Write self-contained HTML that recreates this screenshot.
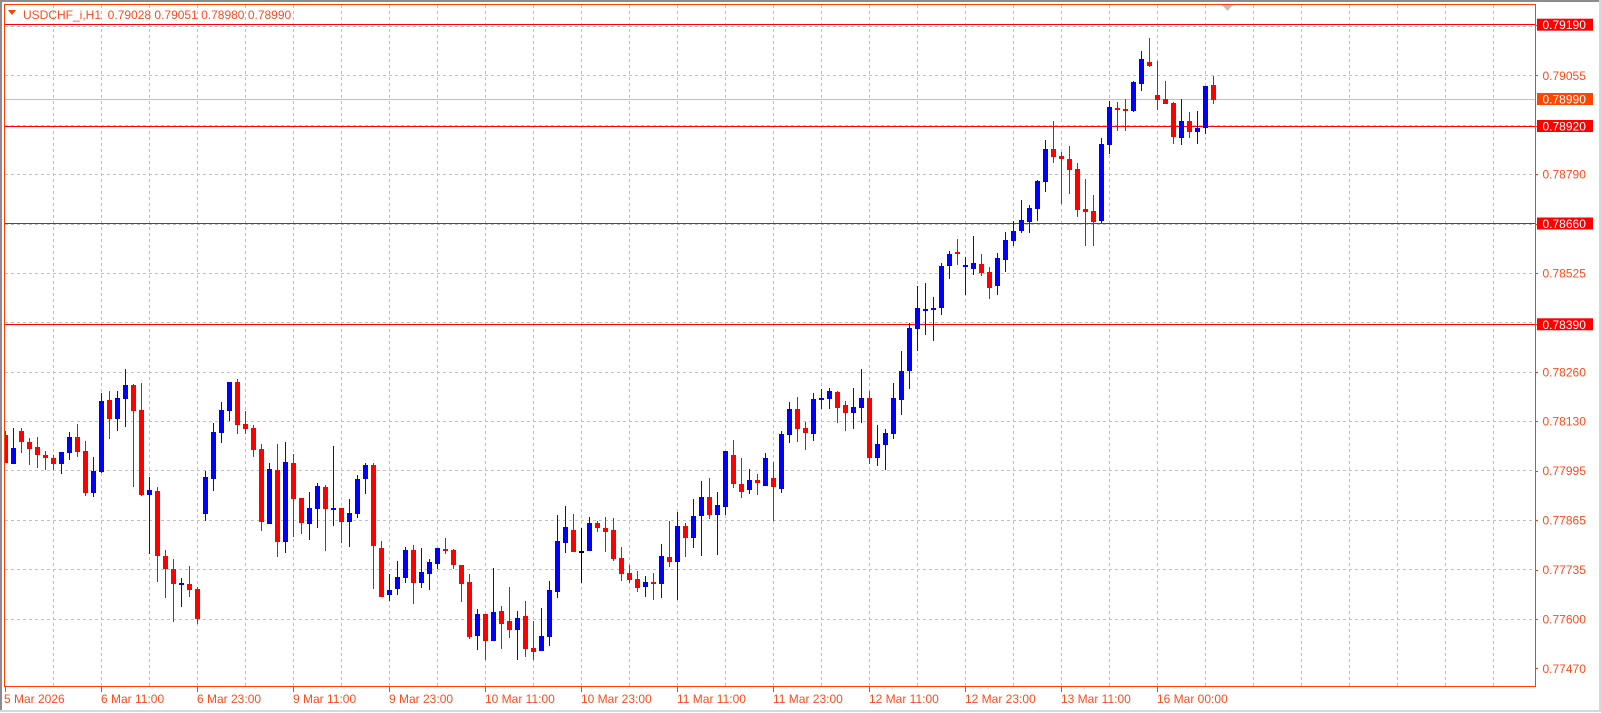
<!DOCTYPE html>
<html><head><meta charset="utf-8"><style>
html,body{margin:0;padding:0;background:#fff;}
body{width:1601px;height:713px;overflow:hidden;position:relative;font-family:"Liberation Sans",Arial,sans-serif;}
svg{position:absolute;left:0;top:0;}
</style></head><body>
<svg id="s" width="1601" height="713" xmlns="http://www.w3.org/2000/svg" font-family="Liberation Sans, Arial, sans-serif">
<rect x="0" y="0" width="1601" height="2" fill="#8c8c8c"/>
<rect x="0" y="0" width="2" height="712" fill="#8c8c8c"/>
<rect x="1599" y="0" width="2" height="712" fill="#d8d8d8"/>
<rect x="0" y="710" width="1601" height="2" fill="#d8d8d8"/>
<g id="grid" stroke="#c0c0c0" stroke-width="1" stroke-dasharray="3,3"></g>
<line x1="5" y1="99.5" x2="1535" y2="99.5" stroke="#c0c0c0" stroke-width="1"/>
<g stroke="#ff0000" stroke-width="1">
<line x1="5" y1="24.5" x2="1535" y2="24.5"/>
<line x1="5" y1="126.5" x2="1535" y2="126.5"/>
<line x1="5" y1="223.5" x2="1535" y2="223.5"/>
<line x1="5" y1="324.5" x2="1535" y2="324.5"/>
</g>
<g id="candles"></g>
<rect x="4.5" y="4.5" width="1531" height="682" fill="none" stroke="#ff4000" stroke-width="1"/>
<polygon points="8,10 16,10 12,15" fill="#ff4000"/>
<text x="23" y="19" font-size="12" fill="#ff4a1a">USDCHF_i,H1&#160; 0.79028 0.79051 0.78980 0.78990</text>
<polygon points="1222,5 1233,5 1227.5,11" fill="#c0c0c0"/>
<g id="ax" font-size="12" fill="#ff4a1a"></g>
</svg>
<script>
var NS="http://www.w3.org/2000/svg";
function el(p,t,a,txt){var e=document.createElementNS(NS,t);for(var k in a)e.setAttribute(k,a[k]);if(txt)e.textContent=txt;p.appendChild(e);return e;}
var g=document.getElementById('grid');
for(var x=53.5;x<1535;x+=48)el(g,'line',{x1:x,y1:5,x2:x,y2:686});
for(var i=0;i<13;i++){var y=25.9+49.4*i;el(g,'line',{x1:5,y1:Math.round(y)+0.5,x2:1535,y2:Math.round(y)+0.5});}
var ax=document.getElementById('ax');
var labs=["0.79190","0.79055","0.78920","0.78790","0.78660","0.78525","0.78390","0.78260","0.78130","0.77995","0.77865","0.77735","0.77600","0.77470"];
var ys=[24.7,75.3,126,174.1,223.5,273,324.3,371.8,421.2,470.6,520,569.5,619,668.3];
for(var i=0;i<labs.length;i++){
 el(ax,'rect',{x:1535,y:Math.round(ys[i]),width:3,height:1,fill:'#ff4000'});
 if(i==0||i==2||i==4||i==6){continue;}
 el(ax,'text',{x:1542.5,y:ys[i]+4.5},labs[i]);
}
function box(y,t,c){el(ax,'rect',{x:1537,y:y-6,width:56,height:12,fill:c});el(ax,'text',{x:1542.5,y:y+4.5,fill:'#fff'},t);}
box(24.7,"0.79190","#ff0000");box(99,"0.78990","#ff4500");box(126,"0.78920","#ff0000");box(223.5,"0.78660","#ff0000");box(324.3,"0.78390","#ff0000");
var tl=["6 Mar 11:00","6 Mar 23:00","9 Mar 11:00","9 Mar 23:00","10 Mar 11:00","10 Mar 23:00","11 Mar 11:00","11 Mar 23:00","12 Mar 11:00","12 Mar 23:00","13 Mar 11:00","16 Mar 00:00"];
el(ax,'rect',{x:5,y:687,width:1,height:5,fill:'#ff4000'});
el(ax,'text',{x:4,y:703},"5 Mar 2026");
for(var i=0;i<tl.length;i++){var x=101+96*i;el(ax,'rect',{x:x,y:687,width:1,height:5,fill:'#ff4000'});el(ax,'text',{x:x,y:703},tl[i]);}
var D="r431,435,463,463;b428,448,464,464;r428,431,442,453;r438,442,449,465;r437,447,455,468;r451,455,458,470;r455,458,464,470;b452,452,464,474;b432,437,453,460;r424,437,452,457;r441,451,493,496;b457,471,493,497;b393,401,472,473;r391,400,419,439;b391,398,419,431;b369,385,399,427;r384,385,411,487;r383,410,495,496;b477,490,495,554;r487,491,556,582;r550,556,569,598;r559,569,584,622;b578,583,585,607;r566,584,590,597;r587,589,619,624;"+
"b471,477,514,521;b423,432,479,491;b402,410,433,443;b382,382,411,421;r379,382,425,434;r411,424,429,434;r425,428,450,457;r444,449,522,531;b463,469,524,524;r444,470,542,557;b442,462,542,553;r454,463,499,537;r498,498,523,534;b492,508,524,540;b483,486,509,528;r485,487,509,551;b446,508,509,526;r508,508,522,543;b499,513,522,547;b475,479,514,518;b463,465,479,494;r463,465,546,589;r541,548,597,597;b574,590,595,601;b561,577,589,595;b547,550,578,583;r545,550,583,604;b548,572,583,588;b559,562,574,590;b548,548,564,569;r538,549,551,554;r549,550,565,569;r565,565,584,602;r574,582,637,639;b609,614,636,650;r614,614,641,660;b568,612,641,641;r606,611,624,649;r587,621,630,638;b611,618,630,660;r601,616,649,657;r621,648,652,660;b608,636,651,651;b581,590,637,646;b515,541,592,598;b506,527,543,553;r514,530,552,552;k528,551,552,583;b517,523,551,551;r521,523,528,532;"+
"r517,528,532,552;r518,530,559,561;r547,558,574,581;r565,573,580,583;r571,579,588,592;b576,582,587,597;r573,582,583,600;b544,556,584,598;r521,557,562,567;b512,526,562,600;r523,526,538,557;b499,516,538,548;b481,497,516,556;r478,497,515,519;b492,505,515,555;b451,451,507,515;r440,455,484,488;r458,484,492,498;b469,480,490,494;r474,480,483,495;b453,458,486,486;r462,478,487,521;b431,434,489,493;b402,409,435,443;r397,409,429,442;r422,428,433,450;b393,399,434,441;b389,398,400,409;b388,391,399,409;r391,392,408,423;r401,405,413,431;b388,407,413,429;b369,398,408,423;r391,398,458,464;b425,444,458,466;b429,433,445,470;b383,398,434,439;b351,371,400,415;b323,328,371,389;b286,308,329,351;b283,309,311,335;b297,308,310,341;b263,266,308,315;b251,254,266,279;r239,252,254,265;b257,265,267,295;b236,263,269,275;r254,264,273,276;r267,272,288,299;b253,258,286,295;b232,240,260,272;b221,231,241,246;b200,220,231,233;b205,208,222,233;b180,181,209,221;b140,149,182,192;r121,149,157,163;r152,156,159,204;r146,159,170,194;r163,169,210,217;r179,209,212,246;r195,211,222,246;b138,144,221,223;b101,107,145,154;r102,108,110,131;r99,109,111,131;b81,82,111,112;b51,59,84,91;r38,62,66,67;r61,95,100,110;r81,99,104,104;r102,103,137,144;b99,121,138,145;r112,121,132,138;b111,128,132,144;b86,86,128,134;r76,85,100,104";
var C={r:'#ff0000',b:'#0000ff',k:'#000000'};
var cg=document.getElementById('candles');
D.split(';').forEach(function(s,k){var c=C[s[0]];var v=s.slice(1).split(',').map(Number);
 var bx=3+8*k,wx=5+8*k;
 if(wx>=5)el(cg,'rect',{x:wx,y:v[0],width:1,height:Math.max(v[3]-v[0],1),fill:c});
 var l=Math.max(bx,5);el(cg,'rect',{x:l,y:v[1],width:bx+5-l,height:Math.max(v[2]-v[1],2),fill:c});
});
</script>
</body></html>
